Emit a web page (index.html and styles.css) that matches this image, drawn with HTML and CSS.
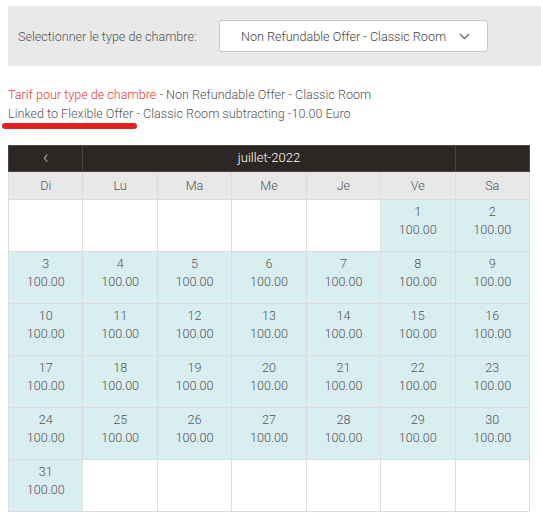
FILE: index.html
```html
<!DOCTYPE html>
<html>
<head>
<meta charset="utf-8">
<link rel="stylesheet" href="styles.css">
</head>
<body>
<div class="panel">
  <span class="panel-label">Selectionner le type de chambre:</span>
  <div class="select">
    <span class="select-text">Non Refundable Offer - Classic Room</span>
    <svg class="chev" width="11" height="7" viewBox="0 0 11 7"><path d="M1 1 L5.5 5.5 L10 1" fill="none" stroke="#666" stroke-width="1.3"/></svg>
  </div>
</div>
<div class="info">
  <div><span class="red">Tarif pour type de chambre</span> - Non Refundable Offer - Classic Room</div>
  <div class="linked">Linked to Flexible Offer - Classic Room subtracting -10.00 Euro<span class="mark"></span></div>
</div>
<table class="cal">
  <tr class="head">
    <td class="nav">&lsaquo;</td>
    <td colspan="5" class="month">juillet-2022</td>
    <td class="nav"></td>
  </tr>
  <tr class="days">
    <td>Di</td><td>Lu</td><td>Ma</td><td>Me</td><td>Je</td><td>Ve</td><td>Sa</td>
  </tr>
  <tr>
    <td class="e"></td><td class="e"></td><td class="e"></td><td class="e"></td><td class="e"></td>
    <td class="d">1<br>100.00</td><td class="d">2<br>100.00</td>
  </tr>
  <tr>
    <td class="d">3<br>100.00</td><td class="d">4<br>100.00</td><td class="d">5<br>100.00</td><td class="d">6<br>100.00</td><td class="d">7<br>100.00</td><td class="d">8<br>100.00</td><td class="d">9<br>100.00</td>
  </tr>
  <tr>
    <td class="d">10<br>100.00</td><td class="d">11<br>100.00</td><td class="d">12<br>100.00</td><td class="d">13<br>100.00</td><td class="d">14<br>100.00</td><td class="d">15<br>100.00</td><td class="d">16<br>100.00</td>
  </tr>
  <tr>
    <td class="d">17<br>100.00</td><td class="d">18<br>100.00</td><td class="d">19<br>100.00</td><td class="d">20<br>100.00</td><td class="d">21<br>100.00</td><td class="d">22<br>100.00</td><td class="d">23<br>100.00</td>
  </tr>
  <tr>
    <td class="d">24<br>100.00</td><td class="d">25<br>100.00</td><td class="d">26<br>100.00</td><td class="d">27<br>100.00</td><td class="d">28<br>100.00</td><td class="d">29<br>100.00</td><td class="d">30<br>100.00</td>
  </tr>
  <tr>
    <td class="d">31<br>100.00</td><td class="e"></td><td class="e"></td><td class="e"></td><td class="e"></td><td class="e"></td><td class="e"></td>
  </tr>
</table>
</body>
</html>
```
FILE: styles.css
```css
html, body { margin: 0; padding: 0; background: #fff; }
body {
  font-family: Roboto, "Liberation Sans", sans-serif;
  font-weight: 300;
  font-size: 12.6px;
  color: #555;
  padding: 6px 0 0 8px;
}
.panel {
  background: #e9e9e9;
  height: 60px;
  display: flex;
  align-items: center;
  padding-left: 10px;
}
.panel-label { color: #555; width: 201px; }
.select {
  box-sizing: border-box;
  width: 269px;
  height: 32px;
  background: #fff;
  border: 1px solid #c8c8c8;
  border-radius: 3px;
  display: flex;
  align-items: center;
  padding-left: 21px;
  padding-right: 17px;
  justify-content: space-between;
}
.select-text { color: #444; }
.info {
  margin-top: 19px;
  line-height: 19px;
  color: #555;
}
.red { color: #e53935; }
.linked { position: relative; }
.mark {
  position: absolute;
  left: -6px;
  top: 19px;
  width: 135px;
  height: 6px;
  border-radius: 3px;
  background: #e02020;
}
.cal {
  margin-top: 22px;
  border-collapse: collapse;
  width: 522px;
  table-layout: fixed;
}
.cal td {
  border: 1px solid #dcdcdc;
  text-align: center;
  padding: 0;
}
.head td {
  background: #2c2724;
  color: #fff;
  height: 26px;
  border-color: #4a4643;
  font-size: 13px;
  line-height: 16px;
  vertical-align: top;
  padding-top: 4px;
  box-sizing: border-box;
}
.head .nav { color: #aaa; font-size: 20px; font-weight: 300; line-height: 16px; padding-top: 3px; }
.days td {
  background: #e8e8e8;
  height: 27px;
  color: #555;
}
.cal td.d, .cal td.e {
  height: 52px;
  vertical-align: top;
  line-height: 18px;
  padding-top: 3px;
  box-sizing: border-box;
}
.cal td.d { background: #d9eef0; color: #555; }
.cal td.e { background: #fff; }
```
